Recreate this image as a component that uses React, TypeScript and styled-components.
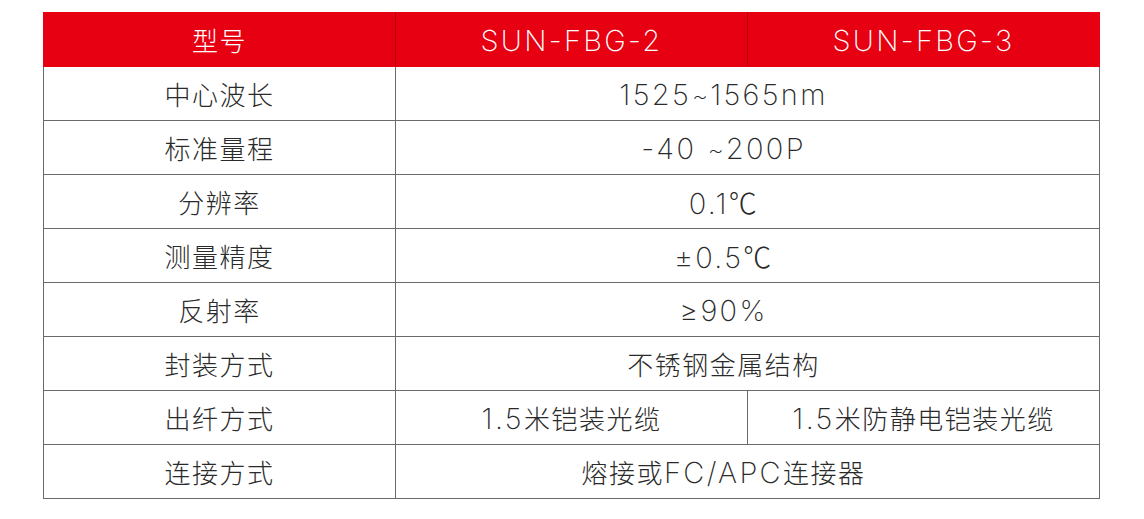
import styled, { createGlobalStyle } from "styled-components";

const GlobalStyle = createGlobalStyle`
    html, body {
        margin: 0;
        padding: 0;
        background: #fff;
    }
    body {
        font-family: "Noto Sans CJK SC", sans-serif;
    }
`;

const Page = styled.div`
    padding: 12px 0 0 43px;
`;

const SpecTable = styled.table`
    border-collapse: collapse;
    table-layout: fixed;
    width: 1057px;
    font-family: "Noto Sans CJK SC", sans-serif;
    font-weight: 300;
    font-size: 26px;
    letter-spacing: 1.5px;
    color: #2a2a2a;
`;

const HeadCell = styled.th`
    height: 53px;
    padding: 0;
    background: #e60012;
    color: #fff;
    font-weight: 300;
    text-align: center;
    border: 1px solid #e60012;
    &:not(:last-child) {
        border-right-color: #b0000c;
    }
`;

const Cell = styled.td<{ $merged?: boolean }>`
    height: 53px;
    padding: 0 ${p => p.$merged ? "48px" : "0"} 0 0;
    text-align: center;
    border: 1px solid #6a6a6a;
    white-space: nowrap;
`;

const Latin = styled.span`
    font-family: "Inter", "Liberation Sans", sans-serif;
    font-weight: 200;
    font-size: 29px;
    letter-spacing: 2.3px;
`;

const Tilde = styled.span`
    font-size: 25px;
    letter-spacing: 1px;
    margin: 0 1px;
`;

const Degree = styled.span`
    font-size: 28px;
`;

const LATIN = /[\x20-\x7e±≥%～]/;

// split mixed text so latin runs get the wider latin face
function Mixed({ text }: { text: string }) {
    const parts = text.split(/([\x20-\x7e±≥%～]+)/).filter(p => p != "");
    return <>{parts.map((p, i) => LATIN.test(p)
        ? <Latin key={i}>{p.split("～").map((s, j) => j == 0 ? s : [<Tilde key={j}>~</Tilde>, s])}</Latin>
        : p == "℃" ? <Degree key={i}>{p}</Degree> : <span key={i}>{p}</span>)}</>;
}

type Row = { label: string; values: string[] };

const rows: Row[] = [
    { label: "中心波长", values: ["1525～1565nm"] },
    { label: "标准量程", values: ["-40 ～200P"] },
    { label: "分辨率", values: ["0.1℃"] },
    { label: "测量精度", values: ["±0.5℃"] },
    { label: "反射率", values: ["≥90%"] },
    { label: "封装方式", values: ["不锈钢金属结构"] },
    { label: "出纤方式", values: ["1.5米铠装光缆", "1.5米防静电铠装光缆"] },
    { label: "连接方式", values: ["熔接或FC/APC连接器"] },
];

export default function App() {
    return <>
        <GlobalStyle />
        <Page>
            <SpecTable>
                <colgroup>
                    <col style={{ width: 352 }} />
                    <col style={{ width: 352 }} />
                    <col style={{ width: 352 }} />
                </colgroup>
                <thead>
                    <tr>
                        <HeadCell>型号</HeadCell>
                        <HeadCell><Mixed text="SUN-FBG-2" /></HeadCell>
                        <HeadCell><Mixed text="SUN-FBG-3" /></HeadCell>
                    </tr>
                </thead>
                <tbody>
                    {rows.map(r => <tr key={r.label}>
                        <Cell>{r.label}</Cell>
                        {r.values.length == 1
                            ? <Cell colSpan={2} $merged><Mixed text={r.values[0]} /></Cell>
                            : r.values.map(v => <Cell key={v}><Mixed text={v} /></Cell>)}
                    </tr>)}
                </tbody>
            </SpecTable>
        </Page>
    </>;
}
